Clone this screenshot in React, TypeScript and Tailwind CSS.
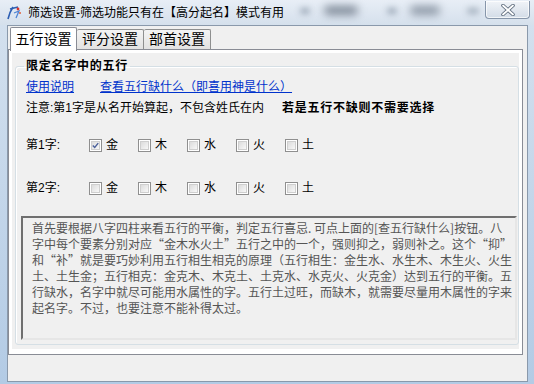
import React from 'react'

const ELEMENTS = ['金', '木', '水', '火', '土']

const MEMO_LINES = [
	'首先要根据八字四柱来看五行的平衡，判定五行喜忌. 可点上面的[查五行缺什么]按钮。八',
	'字中每个要素分别对应“金木水火土”五行之中的一个，强则抑之，弱则补之。这个“抑”',
	'和“补”就是要巧妙利用五行相生相克的原理（五行相生：金生水、水生木、木生火、火生',
	'土、土生金；五行相克：金克木、木克土、土克水、水克火、火克金）达到五行的平衡。五',
	'行缺水，名字中就尽可能用水属性的字。五行土过旺，而缺木，就需要尽量用木属性的字来',
	'起名字。不过，也要注意不能补得太过。',
]

/**
 * Win7 style checkbox square.
 */
function CheckBox({ checked }: { checked?: boolean }) {
	return (
		<span className="flex h-[13px] w-[13px] items-center justify-center border border-[#8f8f8f] bg-white p-px">
			<span className="flex h-full w-full items-center justify-center border border-[#cfcfcf] bg-gradient-to-br from-[#dcdcdc] to-[#f8f8f8]">
				{checked && (
					<svg width="9" height="9" viewBox="0 0 9 9">
						<path d="M1 4.5 L3.5 7 L8 1.5" fill="none" stroke="#4a5f9a" strokeWidth="1.8" />
					</svg>
				)}
			</span>
		</span>
	)
}

/**
 * One row of element checkboxes.
 */
function ElementRow({ label, checked }: { label: string; checked: string[] }) {
	return (
		<div className="flex h-4 items-center">
			<span className="w-[63px]">{label}</span>
			{ELEMENTS.map((el) => (
				<span key={el} className="flex w-[49px] items-center gap-[4px]">
					<CheckBox checked={checked.includes(el)} />
					<span>{el}</span>
				</span>
			))}
		</div>
	)
}

function CloseButton() {
	return (
		<div className="flex h-[18px] w-[45px] items-center justify-center rounded-b-[4px] border border-t-0 border-[#8796aa] bg-gradient-to-b from-[#f1f4f8] to-[#d3dce7] shadow-[inset_0_0_0_1px_rgba(255,255,255,0.7)]">
			<svg width="16" height="12" viewBox="0 0 16 12">
				<path d="M3 1.5 L13 10.5 M13 1.5 L3 10.5" stroke="#5d6b7c" strokeWidth="3.6" strokeLinecap="round" />
				<path d="M3 1.5 L13 10.5 M13 1.5 L3 10.5" stroke="#ffffff" strokeWidth="1.8" strokeLinecap="round" />
			</svg>
		</div>
	)
}

function AppIcon() {
	return (
		<svg width="17" height="17" viewBox="0 0 17 17">
			<path d="M3 15 C4 10 6 6 8 3" fill="none" stroke="#2d5fb3" strokeWidth="1.6" />
			<path d="M5 5 L13 3" fill="none" stroke="#2d5fb3" strokeWidth="1.4" />
			<path d="M9 9 L14 7 L11 14" fill="none" stroke="#4f84d4" strokeWidth="1.3" />
			<circle cx="13" cy="5" r="1.4" fill="#d9342b" />
			<circle cx="15" cy="9" r="1" fill="#e0603a" />
		</svg>
	)
}

export default function App() {
	return (
		<div className="flex h-[384px] w-[534px] flex-col overflow-hidden bg-gradient-to-b from-[#d6e1ee] to-[#bfd2e6] font-['Liberation_Sans','Noto_Sans_CJK_SC',sans-serif] text-[12px] text-black">
			{/* title bar */}
			<div className="relative flex h-[25px] items-start bg-gradient-to-b from-[#e8eef6] to-[#d5e0ec]">
				<span className="absolute left-[300px] top-[8px] h-[6px] w-[10px] rounded-full bg-[#9aa7b6] blur-[3px]" />
				<span className="absolute left-[324px] top-[6px] h-[9px] w-[34px] rounded-full bg-[#7f8a98] blur-[4px]" />
				<span className="absolute left-[387px] top-[8px] h-[6px] w-[10px] rounded-full bg-[#9aa7b6] blur-[3px]" />
				<span className="absolute left-[410px] top-[6px] h-[9px] w-[30px] rounded-full bg-[#8c97a5] blur-[4px]" />
				<span className="absolute left-[467px] top-[8px] h-[6px] w-[12px] rounded-full bg-[#a2aebc] blur-[3px]" />
				<div className="ml-[5px] mt-[4px] flex h-[17px] w-[17px] items-center justify-center">
					<AppIcon />
				</div>
				<span className="relative ml-[6px] mt-[5px] leading-[16px]">筛选设置-筛选功能只有在【高分起名】模式有用</span>
				<div className="relative ml-auto mr-[4px] mt-px">
					<CloseButton />
				</div>
			</div>

			<div className="flex flex-1">
				<div className="w-[7px] bg-gradient-to-b from-[#d3e0ee] to-[#b3cbe5]" />
				{/* client area */}
				<div className="flex flex-1 flex-col border border-[#8a99ab] bg-[#f0f0f0]">
					{/* tabs */}
					<div className="flex h-[23px] items-end pl-[2px] text-[14px]">
						<div className="relative z-10 -mb-[2px] flex h-[24px] w-[67px] items-center justify-center rounded-t-[2px] border border-b-0 border-[#898c95] bg-white">
							五行设置
						</div>
						<div className="flex h-[20px] w-[67px] items-center justify-center rounded-t-[2px] border border-b-0 border-l-0 border-[#8e8f8f] bg-gradient-to-b from-[#f4f4f4] to-[#e2e2e2]">
							评分设置
						</div>
						<div className="flex h-[20px] w-[67px] items-center justify-center rounded-t-[2px] border border-b-0 border-l-0 border-[#8e8f8f] bg-gradient-to-b from-[#f4f4f4] to-[#e2e2e2]">
							部首设置
						</div>
					</div>

					{/* tab panel */}
					<div className="flex h-[306px] w-[515px] flex-col border border-[#898c95] bg-white px-[3px] pb-[5px] pt-[3px]">
						<div className="flex flex-1 flex-col bg-[#f0f0f0] pb-[4px] pl-[3px] pt-[5px]">
							<fieldset className="flex-1 rounded-[3px] border border-[#d5dfe5] pb-[4px] pl-[5px] pr-px shadow-[inset_1px_1px_0_#ffffff]">
								<legend className="ml-[3px] px-[2px] text-[12px] font-bold leading-[16px] tracking-[0.75px]">
									限定名字中的五行
								</legend>
								<div className="mt-[5px] flex h-4 items-center pl-[5px] text-[#0033cc]">
									<span className="underline">使用说明</span>
									<span className="ml-[26px] underline">查看五行缺什么（即喜用神是什么）</span>
								</div>
								<div className="mt-[5px] flex h-4 items-center pl-[5px]">
									<span>注意:第1字是从名开始算起，不包含姓氏在内</span>
									<span className="ml-[18px] font-bold tracking-[0.75px]">若是五行不缺则不需要选择</span>
								</div>
								<div className="mt-[21px] pl-[5px]">
									<ElementRow label="第1字:" checked={['金']} />
								</div>
								<div className="mt-[27px] pl-[5px]">
									<ElementRow label="第2字:" checked={[]} />
								</div>
								<div
									lang="zh-CN"
									className="mt-[20px] h-[124px] border-2 border-b-[#e6e6e6] border-l-[#6f6f6f] border-r-[#e6e6e6] border-t-[#6f6f6f] bg-[#f0f0f0] pl-[9px] pt-[2px] font-['Noto_Sans_CJK_SC',sans-serif] leading-[16px] text-[#555555]"
								>
									{MEMO_LINES.map((line) => (
										<div key={line} className="whitespace-nowrap">
											{line}
										</div>
									))}
								</div>
							</fieldset>
						</div>
					</div>
				</div>
				<div className="w-[6px] bg-gradient-to-b from-[#d3e0ee] to-[#b3cbe5]" />
			</div>
			<div className="h-[2px] bg-[#b3cbe5]" />
		</div>
	)
}
